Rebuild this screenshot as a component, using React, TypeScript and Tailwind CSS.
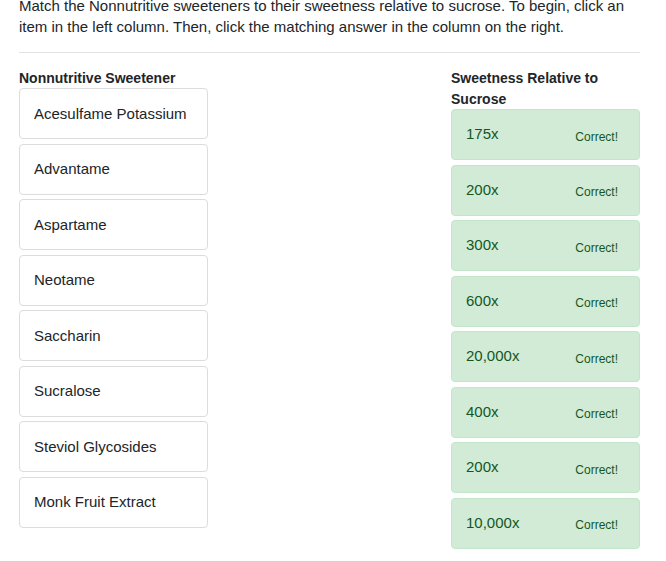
const sweeteners = [
  "Acesulfame Potassium",
  "Advantame",
  "Aspartame",
  "Neotame",
  "Saccharin",
  "Sucralose",
  "Steviol Glycosides",
  "Monk Fruit Extract",
];

const answers = ["175x", "200x", "300x", "600x", "20,000x", "400x", "200x", "10,000x"];

export default function App() {
  return (
    <div className="bg-white text-[#212529] font-['Liberation_Sans',Arial,sans-serif] px-[19px] pr-[26px] -mt-[5px]">
      <p className="text-[15px] leading-[21px]">
        Match the Nonnutritive sweeteners to their sweetness relative to sucrose. To begin, click an
        item in the left column. Then, click the matching answer in the column on the right.
      </p>
      <hr className="mt-[15px] border-t border-[#e3e3e3]" />

      <div className="flex justify-between mt-[16px]">
        <div className="w-[189px]">
          <h3 className="font-bold text-[14px] leading-[21px] -mt-[1px]">
            Nonnutritive Sweetener
          </h3>
          <div className="flex flex-col gap-[4.5px] -mt-[1px]">
            {sweeteners.map((s) => (
              <div
                key={s}
                className="h-[51px] flex items-center px-[14px] border border-[#dcdcdc] rounded-[4px] text-[15px]"
              >
                <span className="mt-[1px]">{s}</span>
              </div>
            ))}
          </div>
        </div>

        <div className="w-[189px]">
          <h3 className="font-bold text-[14px] leading-[21px] -mt-[1px]">
            Sweetness Relative to
            <br />
            Sucrose
          </h3>
          <div className="flex flex-col gap-[4.5px] -mt-[1px]">
            {answers.map((a, i) => (
              <div
                key={i}
                className="h-[51px] flex items-center justify-between pl-[14px] pr-[21px] bg-[#d1ebd6] border border-[#c3e6cb] rounded-[4px] text-[#155724]"
              >
                <span className="text-[15px]">{a}</span>
                <span className="text-[12px] mt-[4px]">Correct!</span>
              </div>
            ))}
          </div>
        </div>
      </div>
    </div>
  );
}
